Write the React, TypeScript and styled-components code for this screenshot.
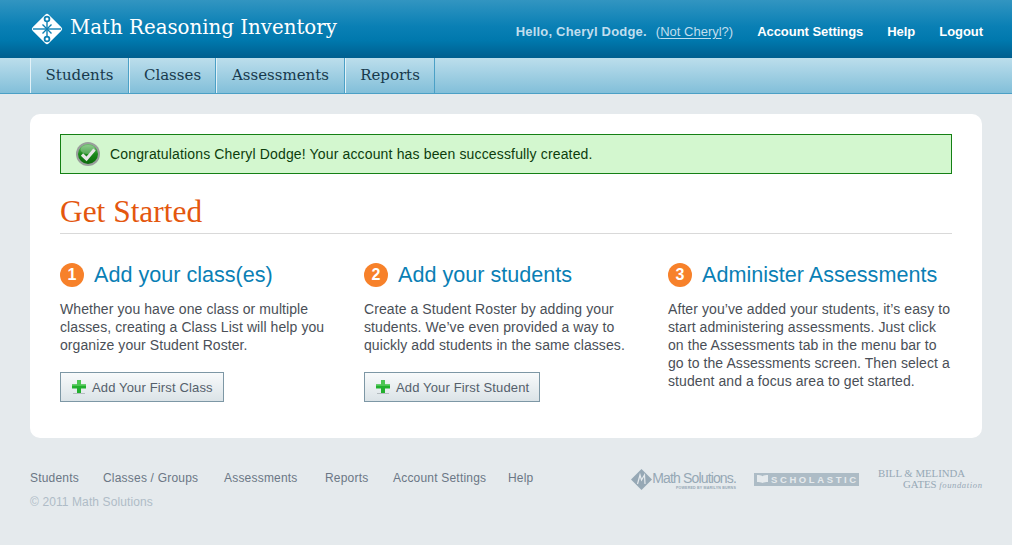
import React from 'react'
import styled, { createGlobalStyle } from 'styled-components'

const GlobalStyle = createGlobalStyle`
  html, body {
    margin: 0;
    padding: 0;
    background: #e5eaed;
    font-family: "Liberation Sans", Arial, sans-serif;
  }
`

const Page = styled.div`
  width: 1012px;
  height: 545px;
  overflow: hidden;
  background: #e5eaed;
`

const Header = styled.header`
  height: 58px;
  box-sizing: border-box;
  display: flex;
  align-items: center;
  justify-content: space-between;
  padding: 0 29px 0 30px;
  background: linear-gradient(#3295c1 0%, #0a80b5 45%, #0078ad 70%, #005f8f 100%);
`

const Brand = styled.div`
  display: flex;
  align-items: center;
  gap: 6px;
  color: #fff;
  font-family: "DejaVu Serif", serif;
  font-size: 19.8px;
  margin-top: -4px;
  svg { margin-top: 4px; }
`

const UserMenu = styled.div`
  display: flex;
  align-items: center;
  font-size: 13px;
  font-weight: bold;
  color: #c0deee;
  margin-top: 4px;
`

const Hello = styled.span`
  letter-spacing: 0.2px;
`

const NotMe = styled.span`
  font-weight: normal;
  margin-left: 9px;
  margin-right: 24px;
  u { text-underline-offset: 2px; }
`

const MenuLink = styled.a`
  color: #fff;
  letter-spacing: -0.05px;
  margin-left: ${p => (p.$first ? 0 : 24)}px;
`

const TabBar = styled.nav`
  height: 36px;
  box-sizing: border-box;
  display: flex;
  padding-left: 30px;
  border-bottom: 1px solid #4ba0c6;
  background: linear-gradient(#bcdeec, #82bfd9);
`

const Tab = styled.a`
  display: flex;
  align-items: center;
  justify-content: center;
  width: ${p => p.$w}px;
  box-sizing: border-box;
  padding-bottom: 2px;
  border-left: 1px solid #e3f2f8;
  border-right: 1px solid #4ba0c6;
  font-family: "DejaVu Serif", serif;
  font-size: 15px;
  color: #17394c;
`

const Card = styled.main`
  margin: 20px 30px 0;
  height: 324px;
  box-sizing: border-box;
  background: #fff;
  border-radius: 10px;
  padding: 20px 30px 0;
`

const Notice = styled.div`
  height: 40px;
  box-sizing: border-box;
  display: flex;
  align-items: center;
  gap: 10px;
  padding-left: 15px;
  background: #d3f7cf;
  border: 1px solid #148014;
  font-size: 14px;
  letter-spacing: 0.15px;
  color: #0c3d0c;
`

const Title = styled.h1`
  margin: 19px 0 0;
  height: 40px;
  border-bottom: 1px solid #d9d9d9;
  font-family: "Liberation Serif", serif;
  font-weight: normal;
  font-size: 31.4px;
  line-height: 38px;
  color: #e4570e;
`

const Columns = styled.div`
  display: grid;
  grid-template-columns: repeat(3, 304px);
  margin-top: 28px;
`

const Step = styled.section`
  width: 284px;
`

const StepHead = styled.div`
  display: flex;
  align-items: center;
  gap: 10px;
  height: 26px;
`

const Badge = styled.span`
  width: 24px;
  height: 24px;
  border-radius: 50%;
  background: #f7812a;
  color: #fff;
  font-weight: bold;
  font-size: 16px;
  display: flex;
  align-items: center;
  justify-content: center;
`

const StepTitle = styled.h2`
  margin: 0;
  font-weight: normal;
  font-size: 21.6px;
  color: #0a7fb5;
  white-space: nowrap;
`

const Body = styled.p`
  margin: 12px 0 0;
  font-size: 14px;
  line-height: 18px;
  letter-spacing: 0.08px;
  color: #4a4f57;
  white-space: nowrap;
`

const AddButton = styled.button`
  margin-top: 18px;
  height: 30px;
  padding: 0 10px 0 11px;
  display: flex;
  align-items: center;
  gap: 6px;
  border: 1px solid #7d97a5;
  background: linear-gradient(#f8fafb, #dbe3e7);
  font-family: inherit;
  font-size: 13px;
  letter-spacing: 0.15px;
  color: #55606c;
`

const Footer = styled.footer`
  margin: 0 30px;
  display: flex;
  justify-content: space-between;
`

const FooterLeft = styled.div`
  padding-top: 32px;
`

const FooterLinks = styled.div`
  display: grid;
  grid-template-columns: 49px 97px 77px 44px 91px auto;
  gap: 24px;
  font-size: 12px;
  line-height: 16px;
  letter-spacing: 0.2px;
  color: #6b7785;
  white-space: nowrap;
`

const Copyright = styled.div`
  margin-top: 8px;
  font-size: 12px;
  line-height: 16px;
  letter-spacing: 0.1px;
  color: #afbcc7;
`

const Partners = styled.div`
  display: flex;
  align-items: center;
  height: 26px;
  margin: 28px -1px 0 0;
  color: #96a8b5;
`

const MathSolutions = styled.div`
  display: flex;
  align-items: flex-start;
  gap: 2px;
  width: 123px;
`

const MathWords = styled.div`
  display: flex;
  flex-direction: column;
  align-items: flex-end;
  width: 82px;
  font-size: 14px;
  line-height: 16px;
  letter-spacing: -0.85px;
  white-space: nowrap;
  padding-top: 1px;
`

const MathTagline = styled.span`
  font-size: 3.6px;
  line-height: 4px;
  font-weight: bold;
  letter-spacing: 0.2px;
`

const Scholastic = styled.div`
  width: 105px;
  height: 13px;
  display: flex;
  align-items: center;
  gap: 3px;
  padding-left: 3px;
  box-sizing: border-box;
  background: #adbcc6;
  color: #e5eaed;
  font-size: 9.5px;
  font-weight: bold;
  letter-spacing: 2.6px;
  white-space: nowrap;
  overflow: hidden;
  margin-right: 19px;
`

const Gates = styled.div`
  width: 105px;
  font-family: "Liberation Serif", serif;
  font-size: 10.8px;
  line-height: 11px;
  white-space: nowrap;
`

const GatesLine = styled.div`
  padding-left: ${p => p.$indent}px;
  i { font-size: 8.6px; letter-spacing: 0.6px; }
`

const Logo = () => (
  <svg width="34" height="34" viewBox="0 0 34 34">
    <rect x="5.6" y="5.6" width="22.8" height="22.8" rx="2.5" fill="#fff" transform="rotate(45 17 17)" />
    <g fill="none" stroke="#0d80b3" strokeWidth="1.4">
      <path d="M3 17 H31" />
      <path d="M17 9 V25" />
      <path d="M12.5 12.5 L21.5 21.5 M21.5 12.5 L12.5 21.5" />
      <circle cx="17" cy="7" r="2.4" strokeWidth="1.8" />
      <circle cx="17" cy="27" r="2.4" strokeWidth="1.8" />
    </g>
  </svg>
)

const CheckIcon = () => (
  <svg width="24" height="24" viewBox="0 0 24 24">
    <defs>
      <linearGradient id="okFill" x1="0" y1="0" x2="0" y2="1">
        <stop offset="0" stopColor="#6cc06c" />
        <stop offset="0.5" stopColor="#1c8a1c" />
        <stop offset="1" stopColor="#0b6b0b" />
      </linearGradient>
    </defs>
    <circle cx="12" cy="12" r="12" fill="#9a9f9c" />
    <circle cx="12" cy="12" r="10" fill="url(#okFill)" />
    <ellipse cx="12" cy="7.5" rx="7.5" ry="4.5" fill="#fff" opacity="0.25" />
    <path d="M6 12.5 L10.5 17 L18.5 7.5" fill="none" stroke="#e6e6e6" strokeWidth="3.2" />
  </svg>
)

const PlusIcon = () => (
  <svg width="14" height="16" viewBox="0 0 14 16">
    <path d="M1 14.5 H13" stroke="#b5bcc0" strokeWidth="1" />
    <path d="M5 1 H9 V5.5 H14 V9.5 H9 V14 H5 V9.5 H0 V5.5 H5 Z" fill="#22b02e" />
    <path d="M5 1 H9 V5.5 H14 V7 H0 V5.5 H5 Z" fill="#4cc653" />
  </svg>
)

const MathMark = () => (
  <svg width="21" height="21" viewBox="0 0 21 21">
    <path d="M10.5 0 L21 10.5 L10.5 21 L0 10.5 Z" fill="#96a8b5" />
    <path d="M6.5 15 L9 6 L10.5 11 L13.5 6 L14 15" fill="none" stroke="#e5eaed" strokeWidth="1.2" />
  </svg>
)

const BookMark = () => (
  <svg width="11" height="8" viewBox="0 0 11 8">
    <path d="M0 0 C2 0 4 0 5.5 1.2 C7 0 9 0 11 0 V7 C9 7 7 7 5.5 8 C4 7 2 7 0 7 Z" fill="#e5eaed" />
  </svg>
)

const steps = [
  {
    n: 1,
    title: 'Add your class(es)',
    lines: ['Whether you have one class or multiple', 'classes, creating a Class List will help you', 'organize your Student Roster.'],
    button: 'Add Your First Class',
  },
  {
    n: 2,
    title: 'Add your students',
    lines: ['Create a Student Roster by adding your', 'students. We’ve even provided a way to', 'quickly add students in the same classes.'],
    button: 'Add Your First Student',
  },
  {
    n: 3,
    title: 'Administer Assessments',
    lines: ['After you’ve added your students, it’s easy to', 'start administering assessments. Just click', 'on the Assessments tab in the menu bar to', 'go to the Assessments screen. Then select a', 'student and a focus area to get started.'],
  },
]

const tabs = [
  { label: 'Students', w: 99 },
  { label: 'Classes', w: 87 },
  { label: 'Assessments', w: 129 },
  { label: 'Reports', w: 90 },
]

const footerLinks = ['Students', 'Classes / Groups', 'Assessments', 'Reports', 'Account Settings', 'Help']

export default function App() {
  return (
    <Page>
      <GlobalStyle />
      <Header>
        <Brand>
          <Logo />
          Math Reasoning Inventory
        </Brand>
        <UserMenu>
          <Hello>Hello, Cheryl Dodge.</Hello>
          <NotMe>
            (<u>Not Cheryl</u>?)
          </NotMe>
          <MenuLink $first>Account Settings</MenuLink>
          <MenuLink>Help</MenuLink>
          <MenuLink>Logout</MenuLink>
        </UserMenu>
      </Header>
      <TabBar>
        {tabs.map(t => (
          <Tab key={t.label} $w={t.w}>{t.label}</Tab>
        ))}
      </TabBar>
      <Card>
        <Notice>
          <CheckIcon />
          Congratulations Cheryl Dodge! Your account has been successfully created.
        </Notice>
        <Title>Get Started</Title>
        <Columns>
          {steps.map(s => (
            <Step key={s.n}>
              <StepHead>
                <Badge>{s.n}</Badge>
                <StepTitle>{s.title}</StepTitle>
              </StepHead>
              <Body>
                {s.lines.map(l => (
                  <React.Fragment key={l}>
                    {l}
                    <br />
                  </React.Fragment>
                ))}
              </Body>
              {s.button && (
                <AddButton>
                  <PlusIcon />
                  {s.button}
                </AddButton>
              )}
            </Step>
          ))}
        </Columns>
      </Card>
      <Footer>
        <FooterLeft>
          <FooterLinks>
            {footerLinks.map(l => (
              <a key={l}>{l}</a>
            ))}
          </FooterLinks>
          <Copyright>© 2011 Math Solutions</Copyright>
        </FooterLeft>
        <Partners>
          <MathSolutions>
            <MathMark />
            <MathWords>
              Math Solutions.
              <MathTagline>POWERED BY MARILYN BURNS</MathTagline>
            </MathWords>
          </MathSolutions>
          <Scholastic>
            <BookMark />
            SCHOLASTIC
          </Scholastic>
          <Gates>
            <GatesLine $indent={0}>BILL &amp; MELINDA</GatesLine>
            <GatesLine $indent={25}>GATES <i>foundation</i></GatesLine>
          </Gates>
        </Partners>
      </Footer>
    </Page>
  )
}
